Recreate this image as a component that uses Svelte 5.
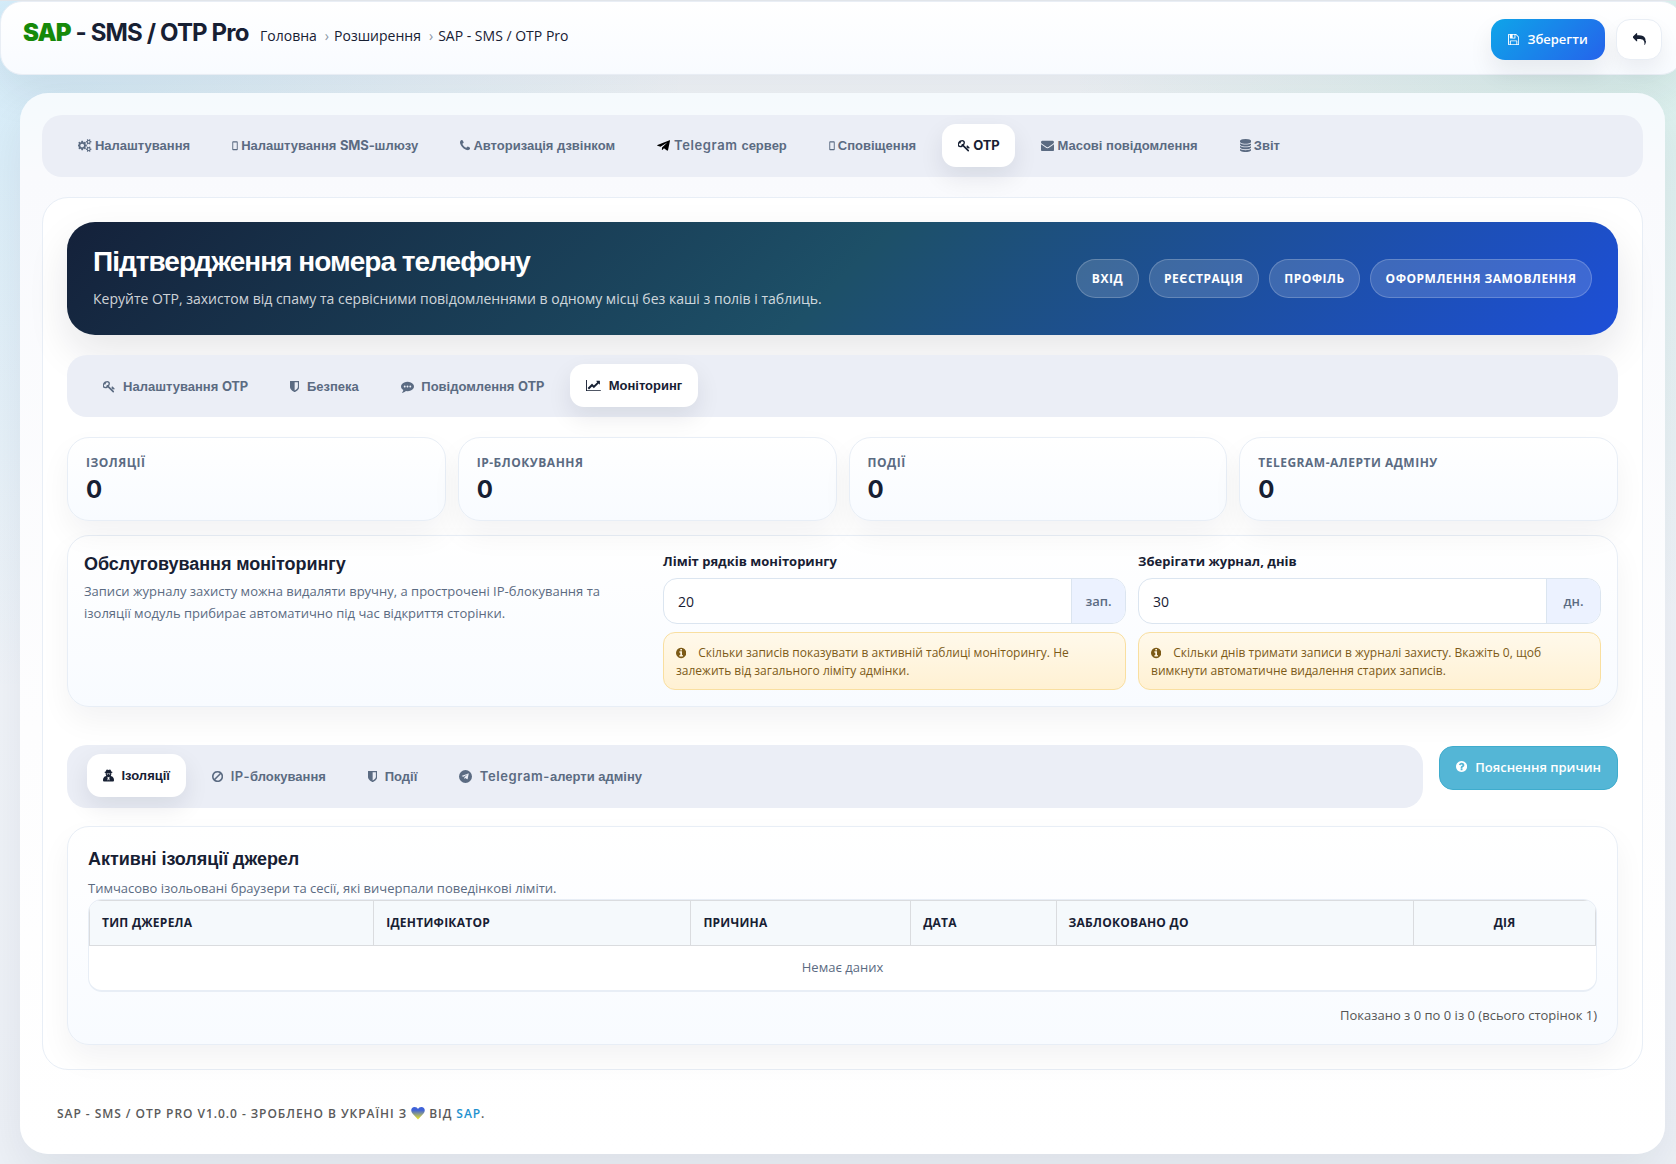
<script>
  const disc = 'M1664 896q0 209-103 385.5t-279.5 279.5-385.5 103-385.5-103-279.5-279.5-103-385.5 103-385.5 279.5-279.5 385.5-103 385.5 103 279.5 279.5 103 385.5z';
  const icons = {
    cogs: { box: '0 0 1920 1792', d: 'M832 896q0-106-75-181t-181-75-181 75-75 181 75 181 181 75 181-75 75-181zm768 512q0-52-38-90t-90-38-90 38-38 90q0 53 37.5 90.5t90.5 37.5 90.5-37.5 37.5-90.5zm0-1024q0-52-38-90t-90-38-90 38-38 90q0 53 37.5 90.5t90.5 37.5 90.5-37.5 37.5-90.5zm-384 421v185q0 10-7 19.5t-16 10.5l-155 24q-11 35-32 76 34 48 90 115 7 11 7 20 0 12-7 19-23 30-82.5 89.5t-78.5 59.5q-11 0-21-7l-115-90q-37 19-77 31-11 108-23 155-7 24-30 24h-186q-11 0-20-7.5t-10-17.5l-23-153q-34-10-75-31l-118 89q-7 7-20 7-11 0-21-8-144-133-144-160 0-9 7-19 10-14 41-53t47-61q-23-44-35-82l-152-24q-10-1-17-9.5t-7-19.5v-185q0-10 7-19.5t16-10.5l155-24q11-35 32-76-34-48-90-115-7-11-7-20 0-12 7-20 22-30 82-89t79-59q11 0 21 7l115 90q34-18 77-32 11-108 23-154 7-24 30-24h186q11 0 20 7.5t10 17.5l23 153q34 10 75 31l118-89q8-7 20-7 11 0 21 8 144 133 144 160 0 8-7 19-12 16-42 54t-45 60q23 48 34 82l152 23q10 2 17 10.5t7 19.5zm640 533v140q0 16-149 31-12 27-30 52 51 113 51 138 0 4-4 7-122 71-124 71-8 0-46-47t-52-68q-20 2-30 2t-30-2q-14 21-52 68t-46 47q-2 0-124-71-4-3-4-7 0-25 51-138-18-25-30-52-149-15-149-31v-140q0-16 149-31 13-29 30-52-51-113-51-138 0-4 4-7 4-2 35-20t59-34 30-16q8 0 46 46.5t52 67.5q20-2 30-2t30 2q51-71 92-112l6-2q4 0 124 70 4 3 4 7 0 25-51 138 17 23 30 52 149 15 149 31zm0-1024v140q0 16-149 31-12 27-30 52 51 113 51 138 0 4-4 7-122 71-124 71-8 0-46-47t-52-68q-20 2-30 2t-30-2q-14 21-52 68t-46 47q-2 0-124-71-4-3-4-7 0-25 51-138-18-25-30-52-149-15-149-31v-140q0-16 149-31 13-29 30-52-51-113-51-138 0-4 4-7 4-2 35-20t59-34 30-16q8 0 46 46.5t52 67.5q20-2 30-2t30 2q51-71 92-112l6-2q4 0 124 70 4 3 4 7 0 25-51 138 17 23 30 52 149 15 149 31z' },
    mobile: { box: '0 0 830 1792', d: 'M150 296h530q110 0 110 110v1040q0 110-110 110h-530q-110 0-110-110v-1040q0-110 110-110zm20 170v920h490v-920z' },
    phone: { box: '192 0 1408 1792', d: 'M1600 1240q0 27-10 70.5t-21 68.5q-21 50-122 106-94 51-186 51-27 0-53-3.5t-57.5-12.5-47-14.5-55.5-20.5-49-18q-98-35-175-83-127-79-264-216t-216-264q-48-77-83-175-3-9-18-49t-20.5-55.5-14.5-47-12.5-57.5-3.5-53q0-92 51-186 56-101 106-122 25-11 68.5-21t70.5-10q14 0 21 3 18 6 53 76 11 19 30 54t35 63.5 31 53.5q3 4 17.5 25t21.5 35.5 7 28.5q0 20-28.5 50t-62 55-62 53-28.5 46q0 9 5 22.5t8.5 20.5 14 24 11.5 19q76 137 174 235t235 174q2 1 19 11.5t24 14 20.5 8.5 22.5 5q18 0 46-28.5t53-62 55-62 50-28.5q14 0 28.5 7t35.5 21.5 25 17.5q25 15 53.5 31t63.5 35 54 30q70 35 76 53 3 7 3 21z' },
    plane: { box: '0 0 24 24', d: 'M23.2 2.2 .9 10.9c-1 .5-1 1.200 0 1.500l5.600 1.800L19 6.300 9.300 15.500 9 20.500c.6 0 .9-.3 1.200-.6l2.700-2.600 5.500 4c1 .6 1.700.3 2-.9L24 3.400c.2-1-.2-1.500-.8-1.200z' },
    key: { box: '64 0 1664 1792', d: 'M832 512q0-80-56-136t-136-56-136 56-56 136q0 42 19 83-41-19-83-19-80 0-136 56t-56 136 56 136 136 56 136-56 56-136q0-42-19-83 41 19 83 19 80 0 136-56t56-136zm851 704q0 17-49 66t-66 49q-9 0-28.5-16t-36.5-33-38.5-40-24.5-26l-96 96 220 220q28 28 28 68 0 42-39 81t-81 39q-40 0-68-28l-671-671q-176 131-365 131-163 0-265.5-102.5t-102.5-265.5q0-160 95-313t248-248 313-95q163 0 265.5 102.5t102.5 265.5q0 189-131 365l355 355 96-96q-3-3-26-24.5t-40-38.5-33-36.5-16-28.5q0-17 49-66t66-49q13 0 23 10 6 6 46 44.5t82 79.5 86.5 86 73 78 28.5 41z' },
    envelope: { box: '0 0 1792 1792', d: 'M1792 710v794q0 66-47 113t-113 47h-1472q-66 0-113-47t-47-113v-794q44 49 101 87 362 246 497 345 57 42 92.500 65.500t94.500 48 110 24.500h2q51 0 110-24.500t94.500-48 92.500-65.500q170-123 498-345 57-39 100-87zm0-294q0 79-49 151t-122 123q-376 261-468 325-10 7-42.500 31t-54 38.500-52 32.500-57.500 27-50 9h-2q-23 0-50-9t-57.500-27-52-32.500-54-38.500-42.500-31q-91-64-262-182.500t-205-142.500q-62-42-117-115.500t-55-136.500q0-78 41.500-130t118.500-52h1472q65 0 112.500 47t47.500 113z' },
    database: { box: '128 0 1536 1792', d: 'M896 768q237 0 443-43t325-127v170q0 69-103 128t-280 93.500-385 34.500-385-34.500-280-93.500-103-128v-170q119 84 325 127t443 43zm0 768q237 0 443-43t325-127v170q0 69-103 128t-280 93.500-385 34.500-385-34.500-280-93.500-103-128v-170q119 84 325 127t443 43zm0-384q237 0 443-43t325-127v170q0 69-103 128t-280 93.500-385 34.500-385-34.500-280-93.500-103-128v-170q119 84 325 127t443 43zm0-1152q208 0 385 34.500t280 93.500 103 128v128q0 69-103 128t-280 93.500-385 34.500-385-34.500-280-93.500-103-128v-128q0-69 103-128t280-93.500 385-34.500z' },
    shield: { box: '256 0 1280 1792', d: 'M1344 960v-640h-448v1137q119-63 213-137 235-184 235-360zm192-768v768q0 86-33.500 170.500t-83 150-118 127.500-126.500 103-121 77.500-89.500 49.500-42.500 20q-12 6-26 6t-26-6q-16-7-42.500-20t-89.500-49.500-121-77.500-126.500-103-118-127.500-83-150-33.500-170.500v-768q0-26 19-45t45-19h1152q26 0 45 19t19 45z' },
    comment: { box: '0 0 1792 1792', d: 'M640 896q0-53-37.500-90.500t-90.500-37.500-90.500 37.500-37.500 90.500 37.500 90.500 90.500 37.500 90.500-37.500 37.500-90.500zm384 0q0-53-37.500-90.500t-90.500-37.500-90.500 37.500-37.500 90.500 37.500 90.500 90.500 37.500 90.500-37.500 37.500-90.500zm384 0q0-53-37.500-90.500t-90.500-37.500-90.500 37.500-37.500 90.500 37.500 90.500 90.500 37.500 90.500-37.500 37.500-90.500zm384 0q0 174-120 321.500t-326 233-450 85.500q-110 0-211-18-173 173-435 229-52 10-86 13-12 1-22-6t-13-18q-4-15 20-37 5-5 23.500-21.500t25.500-23.500 23.500-25.500 24-31.500 20.500-37 20-48 14.500-57.500 12.500-72.500q-146-90-229.500-216.500t-83.500-269.500q0-174 120-321.500t326-233 450-85.500 450 85.500 326 233 120 321.500z' },
    chart: { box: '0 0 2048 1792', d: 'M2048 1536v128h-2048v-1536h128v1408h1920zm-128-1248v435q0 21-19.500 29.500t-35.500-7.500l-121-121-633 633q-10 10-23 10t-23-10l-233-233-416 416-192-192 585-585q10-10 23-10t23 10l233 233 464-464-121-121q-16-16-7.500-35.500t29.500-19.500h435q14 0 23 9t9 23z' },
    secret: { box: '0 0 22 26', d: 'M8 1c1 0 2 .8 3 .8s2-.8 3-.8c1.300 0 2 2 2.400 4 1.600.4 2.600.9 2.600 1.500s-1 1.100-2.300 1.500c.2 2.400-.3 4.600-1.300 6.200l3.200 1c2 1.500 3.400 4.500 3.400 7.300 0 1.800-1 2.500-2.500 2.500h-17C1 25 0 24.300 0 22.500c0-2.800 1.400-5.800 3.400-7.300l3.200-1C5.600 12.600 5.100 10.400 5.300 8 4 7.600 3 7.100 3 6.500S4 5.400 5.600 5C6 3 6.700 1 8 1zM7.300 9c.2 1.600 1.200 2 2.200 1.800.8-.2.700-1.100 1.500-1.100s.7.900 1.500 1.100c1 .2 2-.2 2.200-1.800zM8 15.500l1.600 2.200-.8 4.800 1.400-.2.800-3 .8 3 1.400.2-.8-4.800 1.600-2.200-3 1z' },
    ban: { box: '128 0 1536 1792', d: 'M1440 893q0-161-87-295l-754 753q137 89 297 89 111 0 211.500-43.500t173.500-116.500 116-174.500 43-212.500zm-999 299l755-754q-135-91-300-91-148 0-273 73t-198 199-73 274q0 162 89 299zm1223-299q0 157-61 300t-163.500 246-245 164-298.500 61-298.500-61-245-164-163.500-246-61-300 61-299.500 163.500-245.500 245-164 298.500-61 298.500 61 245 164 163.500 245.500 61 299.500z' },
    telegram: { box: '0 0 28 28', d: 'M14 0a14 14 0 1 1 0 28 14 14 0 0 1 0-28zM20.900 8.300c.2-.9-.3-1.300-.9-1L6.500 12.500c-.9.400-.9.900-.2 1.100l3.500 1.100 8-5c.4-.2.700-.1.400.200l-6.500 5.900-.2 3.500c.4 0 .5-.2.700-.4l1.700-1.600 3.500 2.600c.6.4 1.100.2 1.200-.6z' },
    floppy: { box: '128 0 1536 1792', d: 'M512 1536h768v-384h-768v384zm896 0h128v-896q0-14-10-38.500t-20-34.500l-281-281q-10-10-34-20t-39-10v416q0 40-28 68t-68 28h-576q-40 0-68-28t-28-68v-416h-128v1280h128v-416q0-40 28-68t68-28h832q40 0 68 28t28 68v416zm-384-928v-320q0-13-9.500-22.500t-22.500-9.500h-192q-13 0-22.500 9.500t-9.500 22.500v320q0 13 9.500 22.500t22.500 9.500h192q13 0 22.500-9.500t9.500-22.500zm640 32v928q0 40-28 68t-68 28h-1344q-40 0-68-28t-28-68v-1344q0-40 28-68t68-28h928q40 0 88 20t76 48l280 280q28 28 48 76t20 88z' },
    reply: { box: '0 0 1792 1792', d: 'M1792 1120q0 166-127 451-3 7-10.500 24t-13.500 30-13 22q-12 17-28 17-15 0-23.500-10t-8.500-25q0-9 2.500-26.500t2.500-23.500q5-68 5-123 0-112-19.500-200.500t-54-153.500-89-112-119.500-78.500-147-49-164.500-23.500-186.500-7h-224v256q0 26-19 45t-45 19-45-19l-512-512q-19-19-19-45t19-45l512-512q19-19 45-19t45 19 19 45v256h224q713 0 875 403 53 134 53 333z' },
    question: { box: '128 0 1536 1792', d: 'M1024 1376v-192q0-14-9-23t-23-9h-192q-14 0-23 9t-9 23v192q0 14 9 23t23 9h192q14 0 23-9t9-23zm256-672q0-88-55.500-163t-138.500-116-170-41q-243 0-371 213-15 24 8 42l132 100q7 6 19 6 16 0 25-12 53-68 86-92 34-24 86-24 48 0 85.500 26t37.500 59q0 38-20 61t-68 45q-63 28-115.500 86.500t-52.500 125.500v36q0 14 9 23t23 9h192q14 0 23-9t9-23q0-19 21.500-49.500t54.500-49.500q32-18 49-28.500t46-35 44.500-48 28-60.500 12.500-81z' + disc },
    info: { box: '128 0 1536 1792', d: 'M1152 1376v-160q0-14-9-23t-23-9h-96v-512q0-14-9-23t-23-9h-320q-14 0-23 9t-9 23v160q0 14 9 23t23 9h96v320h-96q-14 0-23 9t-9 23v160q0 14 9 23t23 9h448q14 0 23-9t9-23zm-128-896v-160q0-14-9-23t-23-9h-192q-14 0-23 9t-9 23v160q0 14 9 23t23 9h192q14 0 23-9t9-23z' + disc },
  };

  const mainTabs = [
    { icon: 'cogs', text: [['cyr', 'Налаштування']] },
    { icon: 'mobile', text: [['cyr', 'Налаштування '], ['abbr', 'SMS-'], ['cyr', 'шлюзу']] },
    { icon: 'phone', text: [['cyr', 'Авторизація дзвінком']] },
    { icon: 'plane', dark: true, text: [['latin', 'Telegram '], ['cyr', 'сервер']] },
    { icon: 'mobile', text: [['cyr', 'Сповіщення']] },
    { icon: 'key', active: true, text: [['abbr', 'OTP']] },
    { icon: 'envelope', text: [['cyr', 'Масові повідомлення']] },
    { icon: 'database', text: [['cyr', 'Звіт']] },
  ];
  const otpTabs = [
    { icon: 'key', text: [['cyr', 'Налаштування '], ['abbr', 'OTP']] },
    { icon: 'shield', text: [['cyr', 'Безпека']] },
    { icon: 'comment', text: [['cyr', 'Повідомлення '], ['abbr', 'OTP']] },
    { icon: 'chart', active: true, text: [['cyr', 'Моніторинг']] },
  ];
  const monitorTabs = [
    { icon: 'secret', active: true, text: [['cyr', 'Ізоляції']] },
    { icon: 'ban', text: [['latin', 'IP-'], ['cyr', 'блокування']] },
    { icon: 'shield', text: [['cyr', 'Події']] },
    { icon: 'telegram', text: [['latin', 'Telegram-'], ['cyr', 'алерти адміну']] },
  ];
  const pages = ['Вхід', 'Реєстрація', 'Профіль', 'Оформлення замовлення'];
  const stats = ['Ізоляції', 'IP-блокування', 'Події', 'Telegram-алерти адміну'];
  const fields = [
    { label: 'Ліміт рядків моніторингу', value: '20', unit: 'зап.', help: 'Скільки записів показувати в активній таблиці моніторингу. Не залежить від загального ліміту адмінки.' },
    { label: 'Зберігати журнал, днів', value: '30', unit: 'дн.', help: 'Скільки днів тримати записи в журналі захисту. Вкажіть 0, щоб вимкнути автоматичне видалення старих записів.' },
  ];
  const columns = ['Тип джерела', 'Ідентифікатор', 'Причина', 'Дата', 'Заблоковано до', 'Дія'];
</script>

{#snippet icon(name)}
  <svg class="icon icon-{name}" viewBox={icons[name].box} aria-hidden="true"><path fill-rule="evenodd" d={icons[name].d} /></svg>
{/snippet}

{#snippet tabs(list, kind)}
  <nav class="tabs {kind}">
    {#each list as tab}
      <a class="tab" class:active={tab.active} class:dark={tab.dark}>
        {@render icon(tab.icon)}
        <span class="tab-text">{#each tab.text as [script, words]}<span class={script}>{words}</span>{/each}</span>
      </a>
    {/each}
  </nav>
{/snippet}

<div class="page">
  <header>
    <h1><b>SAP</b> - SMS / OTP Pro</h1>
    <ul class="crumbs">
      <li>Головна</li>
      <li>Розширення</li>
      <li>SAP - SMS / OTP Pro</li>
    </ul>
    <div class="actions">
      <button class="save">{@render icon('floppy')}Зберегти</button>
      <button class="back" aria-label="Назад">{@render icon('reply')}</button>
    </div>
  </header>

  <main>
    {@render tabs(mainTabs, 'tight')}
    <section class="content">
      <div class="hero">
        <div>
          <h2>Підтвердження номера телефону</h2>
          <p>Керуйте OTP, захистом від спаму та сервісними повідомленнями в одному місці без каші з полів і таблиць.</p>
        </div>
        <div class="pills">
          {#each pages as page}<span class="pill">{page}</span>{/each}
        </div>
      </div>

      {@render tabs(otpTabs, 'loose')}

      <div class="stats">
        {#each stats as stat}
          <div class="stat card"><span>{stat}</span><strong>0</strong></div>
        {/each}
      </div>

      <div class="maintenance card">
        <div class="about">
          <h3>Обслуговування моніторингу</h3>
          <p>Записи журналу захисту можна видаляти вручну, а прострочені IP-блокування та ізоляції модуль прибирає автоматично під час відкриття сторінки.</p>
        </div>
        {#each fields as field}
          <div class="field">
            <div class="label">{field.label}</div>
            <div class="group"><span class="value">{field.value}</span><span class="unit">{field.unit}</span></div>
            <div class="help">{@render icon('info')}{field.help}</div>
          </div>
        {/each}
      </div>

      <div class="toolbar">
        {@render tabs(monitorTabs, 'loose')}
        <button class="explain">{@render icon('question')}Пояснення причин</button>
      </div>

      <div class="listing card">
        <h3>Активні ізоляції джерел</h3>
        <p>Тимчасово ізольовані браузери та сесії, які вичерпали поведінкові ліміти.</p>
        <div class="table">
          <div class="thead">
            {#each columns as column}<span>{column}</span>{/each}
          </div>
          <div class="empty">Немає даних</div>
        </div>
        <div class="paging">Показано з 0 по 0 із 0 (всього сторінок 1)</div>
      </div>
    </section>

    <footer>
      SAP - SMS / OTP Pro v1.0.0 - Зроблено в Україні з
      <svg class="heart" viewBox="0 0 24 24" aria-hidden="true">
        <defs><linearGradient id="flag" x1="0" y1="0" x2="0" y2="1"><stop offset=".25" stop-color="#3f62d8" /><stop offset=".95" stop-color="#e6e02c" /></linearGradient></defs>
        <path fill="url(#flag)" d="M12 23 2.500 13C-1.500 8 .5 1.500 6.200 1.500 9 1.500 11 3 12 5c1-2 3-3.500 5.800-3.500C23.500 1.500 25.500 8 21.500 13z" />
      </svg>
      від <a>SAP</a>.
    </footer>
  </main>
</div>

<style>
  :global(body) { margin: 0; overflow: hidden; }
  .page, .page * { box-sizing: border-box; }
  .page {
    width: 1676px; height: 1164px; overflow: hidden; border-top: 1px solid #e1e5ea;
    font: 13px/1.5 "Open Sans", "Noto Sans", sans-serif; color: #172033;
    background:
      radial-gradient(circle at 0 0, rgba(14, 165, 233, .14), transparent 34%),
      radial-gradient(circle at 100% 0, rgba(16, 185, 129, .12), transparent 30%),
      linear-gradient(180deg, #f5f8fc, #edf1f7);
  }
  h1, h2, h3, p, ul { margin: 0; padding: 0; font-weight: inherit; }
  button { font: inherit; padding: 0; }
  .icon { height: 13px; flex: none; fill: currentColor; }

  header {
    display: flex; width: 1683px; height: 74px; padding: 0 20px 0 22px;
    border: 1px solid #e9eef5; border-radius: 22px;
    background: linear-gradient(180deg, #fff, #f8fbff);
    box-shadow: 0 18px 40px rgba(15, 23, 42, .08);
  }
  h1 { width: 237px; padding-top: 13px; font: 700 24px/36px Inter, sans-serif; letter-spacing: -.85px; white-space: nowrap; }
  h1 b { color: #16890a; }
  .crumbs { display: flex; flex: 1; padding-top: 23px; list-style: none; font-size: 14px; line-height: 21px; }
  .crumbs li + li::before { content: "›"; padding: 0 5px 0 8px; color: #8b96a5; }
  .actions { display: flex; gap: 11px; padding-top: 17px; }
  .save {
    display: flex; align-items: center; justify-content: center; gap: 8px; width: 114px; height: 41px;
    border: 0; border-radius: 14px; color: #fff; font-weight: 600;
    background: linear-gradient(135deg, #0ea5e9, #2563eb); box-shadow: 0 12px 24px rgba(15, 23, 42, .08);
  }
  .back {
    display: flex; align-items: center; justify-content: center; width: 46px; height: 41px;
    border: 1px solid #e9eef5; border-radius: 14px; background: #fff; color: #172033;
    box-shadow: 0 10px 20px rgba(15, 23, 42, .06);
  }

  main {
    width: 1645px; height: 1061px; margin: 18px 0 0 20px; padding: 22px; border-radius: 28px;
    background: linear-gradient(180deg, #f5fafd, #f9fafd 80px, #fdfdfe 60%, #fff);
    box-shadow: 0 20px 50px rgba(15, 23, 42, .08);
  }

  .tabs { display: flex; gap: 10px; height: 62px; padding: 9px 20px; border-radius: 20px; background: #ebeef6; }
  .tab {
    display: flex; align-items: center; height: 43px; padding: 0 16px; border-radius: 14px;
    font: 700 13px/20px "Liberation Sans", sans-serif; color: #5b6b82; white-space: nowrap;
  }
  .tab-text { white-space: pre; }
  .tight .tab { gap: 3px; }
  .loose .tab { gap: 7.5px; padding-top: 2px; }
  .loose .tab.active { padding-top: 0; }
  .loose .icon-key { margin-right: .5px; }
  .tab.active { background: #fff; color: #172033; box-shadow: 0 10px 24px rgba(15, 23, 42, .09); }
  .dark .icon { fill: #000; margin-right: 1px; }
  .latin, .abbr { font-family: Inter, sans-serif; font-weight: 600; }
  .latin { letter-spacing: .6px; }
  .abbr { font-weight: 700; letter-spacing: -.15px; }

  .content {
    height: 873px; margin-top: 20px; padding: 24px; border: 1px solid #e8eef6; border-radius: 26px;
    background: #fff;
  }
  .hero {
    display: flex; align-items: center; justify-content: space-between; height: 113px; padding: 0 26px;
    border-radius: 28px; color: #fff; margin-bottom: 20px;
    background: linear-gradient(135deg, #14213a, #1d5068 50%, #1d4fd8);
    box-shadow: 0 18px 40px rgba(15, 23, 42, .1);
  }
  h2 { font: 700 28px/34px "Liberation Sans", sans-serif; letter-spacing: -.98px; }
  .hero p { margin: 8px 0 1px; font-size: 14px; line-height: 24px; color: rgba(255, 255, 255, .8); }
  .pills { display: flex; gap: 10px; }
  .pill {
    height: 39px; padding: 0 14.5px; border: 1px solid rgba(255, 255, 255, .2); border-radius: 20px;
    background: rgba(255, 255, 255, .15); font-size: 12px; font-weight: 700; line-height: 37px;
    letter-spacing: .5px; text-transform: uppercase;
  }

  .card {
    border: 1px solid #e8eef6; border-radius: 22px; background: linear-gradient(180deg, #fff, #f8fbff);
    box-shadow: 0 14px 30px rgba(15, 23, 42, .05);
  }
  .stats { display: grid; grid-template-columns: repeat(4, 1fr); gap: 12px; margin: 20px 0 14px; }
  .stat { display: flex; flex-direction: column; height: 84px; padding: 15px 18px; }
  .stat span { font-size: 12px; font-weight: 700; line-height: 20px; letter-spacing: .5px; text-transform: uppercase; color: #5b6b82; }
  .stat strong { font-family: Inter, sans-serif; font-size: 24px; font-weight: 700; line-height: 34px; }

  .maintenance { display: grid; grid-template-columns: 567fr 463fr 463fr; gap: 12px; height: 172px; padding: 16px; }
  h3 { font: 700 18px/24px "Liberation Sans", sans-serif; letter-spacing: -.05px; }
  .about p { max-width: 545px; margin-top: 4px; line-height: 22px; color: #5b6b82; }
  .label { font-weight: 700; line-height: 18px; }
  .group { display: flex; height: 46px; margin: 8px 0; overflow: hidden; border: 1px solid #dbe5f0; border-radius: 14px; background: #fff; }
  .value { flex: 1; padding-left: 14px; font-size: 14px; line-height: 46px; }
  .unit { width: 54px; border-left: 1px solid #dbe5f0; background: #ecf2ff; font-weight: 600; line-height: 44px; text-align: center; color: #5b6b82; }
  .help {
    height: 58px; padding: 11px 12px; border: 1px solid #f9dfa0; border-radius: 12px;
    background: linear-gradient(180deg, #fff9eb, #fff1d3); font-size: 12px; line-height: 18px; color: #7c5a17;
  }
  .help .icon { height: 12px; margin-right: 12px; vertical-align: -1.5px; }

  .toolbar { display: flex; align-items: flex-start; gap: 16px; margin-top: 38px; }
  .toolbar .tabs { flex: 1; height: 63px; }
  .explain {
    display: flex; align-items: center; justify-content: center; gap: 8px; width: 179px; height: 44px; margin-top: 1px;
    border: 1px solid #3faccd; border-radius: 14px; background: #54b6d6; color: #fff; font-weight: 600;
  }
  .explain .icon { margin-bottom: 3px; }

  .listing { height: 219px; margin-top: 18px; padding: 20px; }
  .listing p { margin-top: 6px; line-height: 22px; color: #5b6b82; }
  .table { height: 93px; border: 1px solid #e8eef6; border-bottom-width: 2px; border-radius: 14px; overflow: hidden; background: #fff; }
  .thead {
    display: grid; grid-template-columns: 284.500fr 317.500fr 220fr 145.500fr 358fr 181fr; height: 46px;
    border: 1px solid #dadcdf; background: #f5f9fc;
  }
  .thead span { padding-left: 12px; border-right: 1px solid #dadcdf; font-size: 12px; font-weight: 700; line-height: 44px; letter-spacing: .25px; text-transform: uppercase; }
  .thead span:last-child { padding: 0; border: 0; text-align: center; }
  .empty { line-height: 43px; text-align: center; color: #5b6b82; }
  .paging { margin-top: 12px; line-height: 22px; text-align: right; color: #555; }

  footer { padding: 34px 15px 0; font-size: 12px; font-weight: 600; line-height: 20px; letter-spacing: .95px; text-transform: uppercase; color: #5a5a5a; }
  .heart { width: 14px; height: 14px; vertical-align: -2px; }
  footer a { color: #1e91cf; }
</style>
